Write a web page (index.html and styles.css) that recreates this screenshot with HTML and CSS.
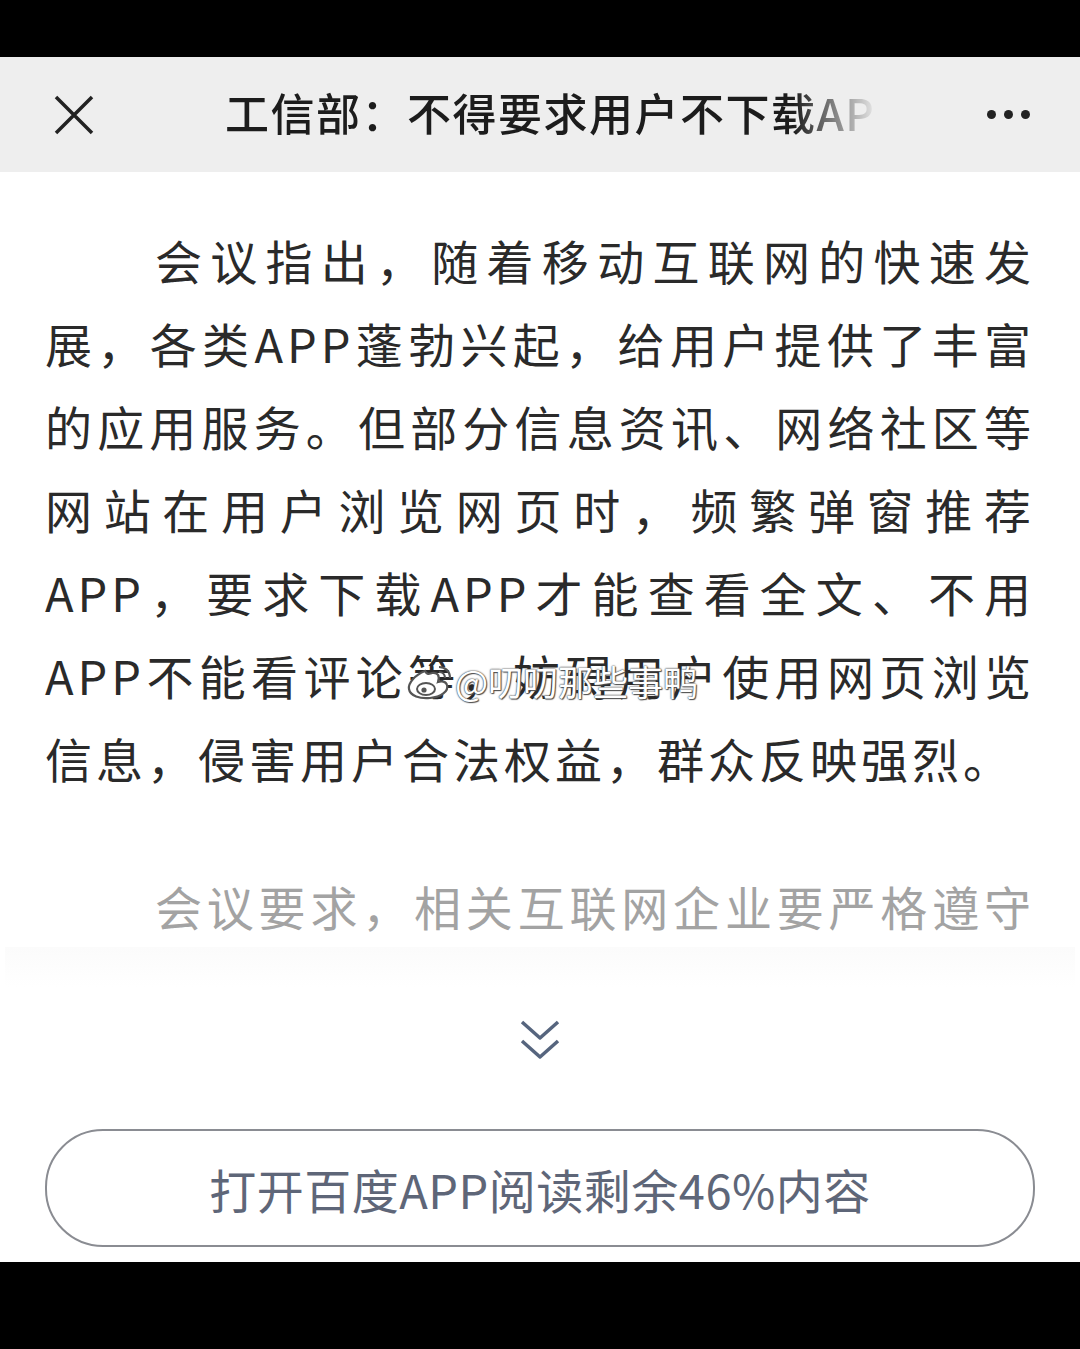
FILE: index.html
```html
<!DOCTYPE html>
<html lang="zh-CN">
<head>
    <meta charset="UTF-8">
    <meta name="viewport" content="width=device-width, initial-scale=1.0">
    <title>工信部：不得要求用户不下载APP</title>
    <link rel="stylesheet" href="styles.css">
</head>
<body>
    <div class="screen">
        <div class="topbar">
            <div class="close">
                <svg width="40" height="40" viewBox="0 0 40 40">
                    <path d="M2 2 L38 38 M38 2 L2 38" stroke="#222" stroke-width="3.5" fill="none"/>
                </svg>
            </div>
            <div class="title">工信部：不得要求用户不下载APP</div>
            <div class="more">
                <span></span><span></span><span></span>
            </div>
        </div>

        <div class="article">
            <p class="para">
                <span class="line first">会议指出，随着移动互联网的快速发</span>
                <span class="line">展，各类APP蓬勃兴起，给用户提供了丰富</span>
                <span class="line">的应用服务。但部分信息资讯、网络社区等</span>
                <span class="line">网站在用户浏览网页时，频繁弹窗推荐</span>
                <span class="line">APP，要求下载APP才能查看全文、不用</span>
                <span class="line">APP不能看评论等，妨碍用户使用网页浏览</span>
                <span class="line last">信息，侵害用户合法权益，群众反映强烈。</span>
            </p>
            <p class="para faded">
                <span class="line first">会议要求，相关互联网企业要严格遵守</span>
            </p>
            <div class="fade"></div>

            <div class="watermark">
                <svg width="50" height="40" viewBox="0 0 50 40">
                    <path d="M20 10 C10 14 3 22 4 28 C5 35 15 38 25 37 C36 36 44 30 42 24 C41 20 36 20 33 21 C35 15 33 11 27 12 C24 13 22 14 20 10 Z" fill="#fff" stroke="#555" stroke-width="2.2"/>
                    <ellipse cx="21" cy="28" rx="9" ry="6" fill="#fff" stroke="#555" stroke-width="2"/>
                    <circle cx="19" cy="29" r="2.6" fill="#555"/>
                    <path d="M34 6 C40 6 45 10 45 17 M34 11 C37 11 40 13 40 17" stroke="#555" stroke-width="2.2" fill="none"/>
                </svg>
                <span>@叨叨那些事鸭</span>
            </div>

            <div class="expand">
                <svg width="44" height="42" viewBox="0 0 44 42">
                    <path d="M4 3 L22 19 L40 3 M4 22 L22 38 L40 22" stroke="#56657e" stroke-width="3.5" fill="none" stroke-linejoin="round"/>
                </svg>
            </div>

            <div class="open-app">打开百度APP阅读剩余46%内容</div>
        </div>
    </div>
</body>
</html>
```

FILE: styles.css
```css
body {
    margin: 0;
    background: #000;
    font-family: "Noto Sans CJK SC", "Noto Sans", sans-serif;
}
.screen {
    margin-top: 57px;
    height: 1205px;
    background: #fff;
    overflow: hidden;
}
.topbar {
    height: 115px;
    background: #eeeeee;
    display: flex;
    align-items: center;
}
.close {
    width: 40px;
    height: 40px;
    margin-left: 54px;
    margin-right: 131px;
}
.close svg {
    display: block;
}
.title {
    width: 653px;
    font-size: 44px;
    font-weight: 500;
    letter-spacing: 1.5px;
    color: #1c1c1c;
    white-space: nowrap;
    overflow: hidden;
    transform: translateY(-3px);
    -webkit-mask-image: linear-gradient(to right, #000 87%, transparent 100%);
    mask-image: linear-gradient(to right, #000 87%, transparent 100%);
}
.more {
    margin-left: auto;
    margin-right: 50px;
    display: flex;
    gap: 8px;
}
.more span {
    width: 9px;
    height: 9px;
    border-radius: 50%;
    background: #222;
}
.article {
    position: relative;
    padding: 46px 45px 0;
}
.para {
    margin: 0;
    font-size: 47px;
    letter-spacing: 4px;
    line-height: 83px;
    color: #2a2a2a;
}
.line {
    display: block;
    white-space: nowrap;
    text-align: justify;
    text-align-last: justify;
}
.line.first {
    padding-left: 110px;
}
.line.last {
    text-align-last: left;
}
.para.faded {
    margin-top: 65px;
    color: #a3a3a3;
}
.fade {
    height: 40px;
    margin: 0 -40px;
    background: linear-gradient(to bottom, #fbfbfb, #fff);
}
.watermark {
    position: absolute;
    left: 405px;
    top: 483px;
    display: flex;
    align-items: center;
    font-size: 35px;
    color: #fff;
    text-shadow: 0 0 2px #444, 0 0 1px #444, 1px 1px 1px #555;
}
.expand {
    display: flex;
    justify-content: center;
    margin-top: 32px;
}
.open-app {
    margin: 68px 0 0;
    height: 114px;
    border: 2px solid #8a8c92;
    border-radius: 58px;
    display: flex;
    align-items: center;
    justify-content: center;
    font-size: 47px;
    letter-spacing: 0.5px;
    color: #5e6678;
}
```
